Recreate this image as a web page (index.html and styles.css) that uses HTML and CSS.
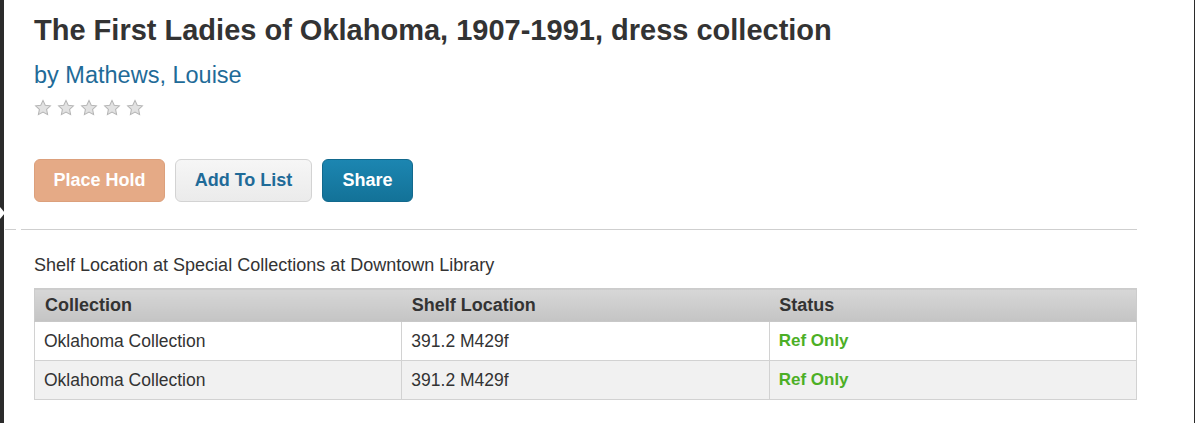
FILE: index.html
```html
<!DOCTYPE html>
<html>
<head>
  <meta charset="UTF-8"/>
  <title>The First Ladies of Oklahoma, 1907-1991, dress collection</title>
  <link rel="stylesheet" href="styles.css">
</head>
<body>
<div class="frame">
  <span class="notch"></span>
  <div class="record">
    <h1 class="title">The First Ladies of Oklahoma, 1907-1991, dress collection</h1>
    <a class="author" href="#">by Mathews, Louise</a>
    <div class="stars">
      <svg viewBox="0 0 16 16"><path d="M8 1.2l2 4.3 4.6.6-3.4 3.2.9 4.6L8 11.6l-4.1 2.3.9-4.6L1.4 6.1 6 5.5z"/></svg>
      <svg viewBox="0 0 16 16"><path d="M8 1.2l2 4.3 4.6.6-3.4 3.2.9 4.6L8 11.6l-4.1 2.3.9-4.6L1.4 6.1 6 5.5z"/></svg>
      <svg viewBox="0 0 16 16"><path d="M8 1.2l2 4.3 4.6.6-3.4 3.2.9 4.6L8 11.6l-4.1 2.3.9-4.6L1.4 6.1 6 5.5z"/></svg>
      <svg viewBox="0 0 16 16"><path d="M8 1.2l2 4.3 4.6.6-3.4 3.2.9 4.6L8 11.6l-4.1 2.3.9-4.6L1.4 6.1 6 5.5z"/></svg>
      <svg viewBox="0 0 16 16"><path d="M8 1.2l2 4.3 4.6.6-3.4 3.2.9 4.6L8 11.6l-4.1 2.3.9-4.6L1.4 6.1 6 5.5z"/></svg>
    </div>
    <div class="actions">
      <button class="btn btn-hold">Place Hold</button>
      <button class="btn btn-list">Add To List</button>
      <button class="btn btn-share">Share</button>
    </div>
  </div>
  <div class="rule"><span></span><span></span></div>
  <div class="holdings">
    <p class="shelf-title">Shelf Location at Special Collections at Downtown Library</p>
    <table class="copies">
      <thead>
        <tr><th>Collection</th><th>Shelf Location</th><th>Status</th></tr>
      </thead>
      <tbody>
        <tr><td>Oklahoma Collection</td><td>391.2 M429f</td><td class="status">Ref Only</td></tr>
        <tr><td>Oklahoma Collection</td><td>391.2 M429f</td><td class="status">Ref Only</td></tr>
      </tbody>
    </table>
  </div>
</div>
</body>
</html>
```

FILE: styles.css
```css
html, body{
  margin: 0;
  height: 100%;
}
body{
  background: #fff;
  color: #333;
  font-family: "Liberation Sans", Arial, sans-serif;
}
.frame{
  position: relative;
  box-sizing: border-box;
  min-height: 423px;
  width: 1195px;
  border-left: 4px solid #2b2b2b;
  border-right: 1px solid #2b2b2b;
  padding-right: 57px;
}
.notch{
  position: absolute;
  left: -4px;
  top: 207px;
  width: 0; height: 0;
  border-top: 6px solid transparent;
  border-bottom: 6px solid transparent;
  border-left: 5px solid #fff;
}
.record{
  padding: 13px 0 0 30px;
}
.title{
  margin: 0;
  font-size: 29px;
  font-weight: bold;
  line-height: 34px;
  color: #333;
}
.author{
  display: block;
  margin-top: 15px;
  font-size: 23.5px;
  line-height: 26px;
  color: #1f6b98;
  text-decoration: none;
}
.stars{
  display: flex;
  gap: 5px;
  margin-top: 11px;
  height: 18px;
}
.stars svg{
  width: 18px;
  height: 18px;
  fill: #e2e2e2;
  stroke: #b5b5b5;
  stroke-width: 0.9;
}
.actions{
  display: flex;
  gap: 10px;
  margin-top: 42px;
}
.btn{
  box-sizing: border-box;
  height: 43px;
  padding: 0;
  border-radius: 6px;
  border: 1px solid transparent;
  font-family: inherit;
  font-size: 18px;
  font-weight: bold;
  cursor: pointer;
}
.btn-hold{
  width: 131px;
  background: #e5aa86;
  border-color: #dca07c;
  color: #fff;
}
.btn-list{
  width: 137px;
  background: linear-gradient(#f6f6f6, #ebebeb);
  border-color: #d3d3d3;
  color: #1f6b98;
}
.btn-share{
  width: 91px;
  background: linear-gradient(#1c86b1, #137298);
  border-color: #12698d;
  color: #fff;
}
.rule{
  display: flex;
  margin-top: 27px;
  gap: 5px;
}
.rule span{
  height: 1px;
  background: #cfcfcf;
}
.rule span:first-child{
  width: 11px;
  margin-left: 1px;
}
.rule span:last-child{
  flex: 1;
}
.holdings{
  padding-left: 30px;
}
.shelf-title{
  margin: 25px 0 13px;
  font-size: 18px;
  line-height: 20px;
  color: #333;
}
.copies{
  width: 100%;
  border-collapse: collapse;
  table-layout: fixed;
  font-size: 17.5px;
  border: 1px solid #cccccc;
}
.copies th{
  height: 32px;
  padding: 0 10px;
  text-align: left;
  font-size: 18px;
  font-weight: bold;
  color: #333;
  background: linear-gradient(#d7d7d7, #c4c4c4);
  border-bottom: 1px solid #c8c8c8;
}
.copies td{
  height: 38px;
  padding: 0 9px;
  color: #333;
  border: 1px solid #d2d2d2;
}
.copies tbody tr:nth-child(2){
  background: #f1f1f1;
}
.copies .status{
  color: #4caf26;
  font-size: 17px;
  font-weight: bold;
}
```
